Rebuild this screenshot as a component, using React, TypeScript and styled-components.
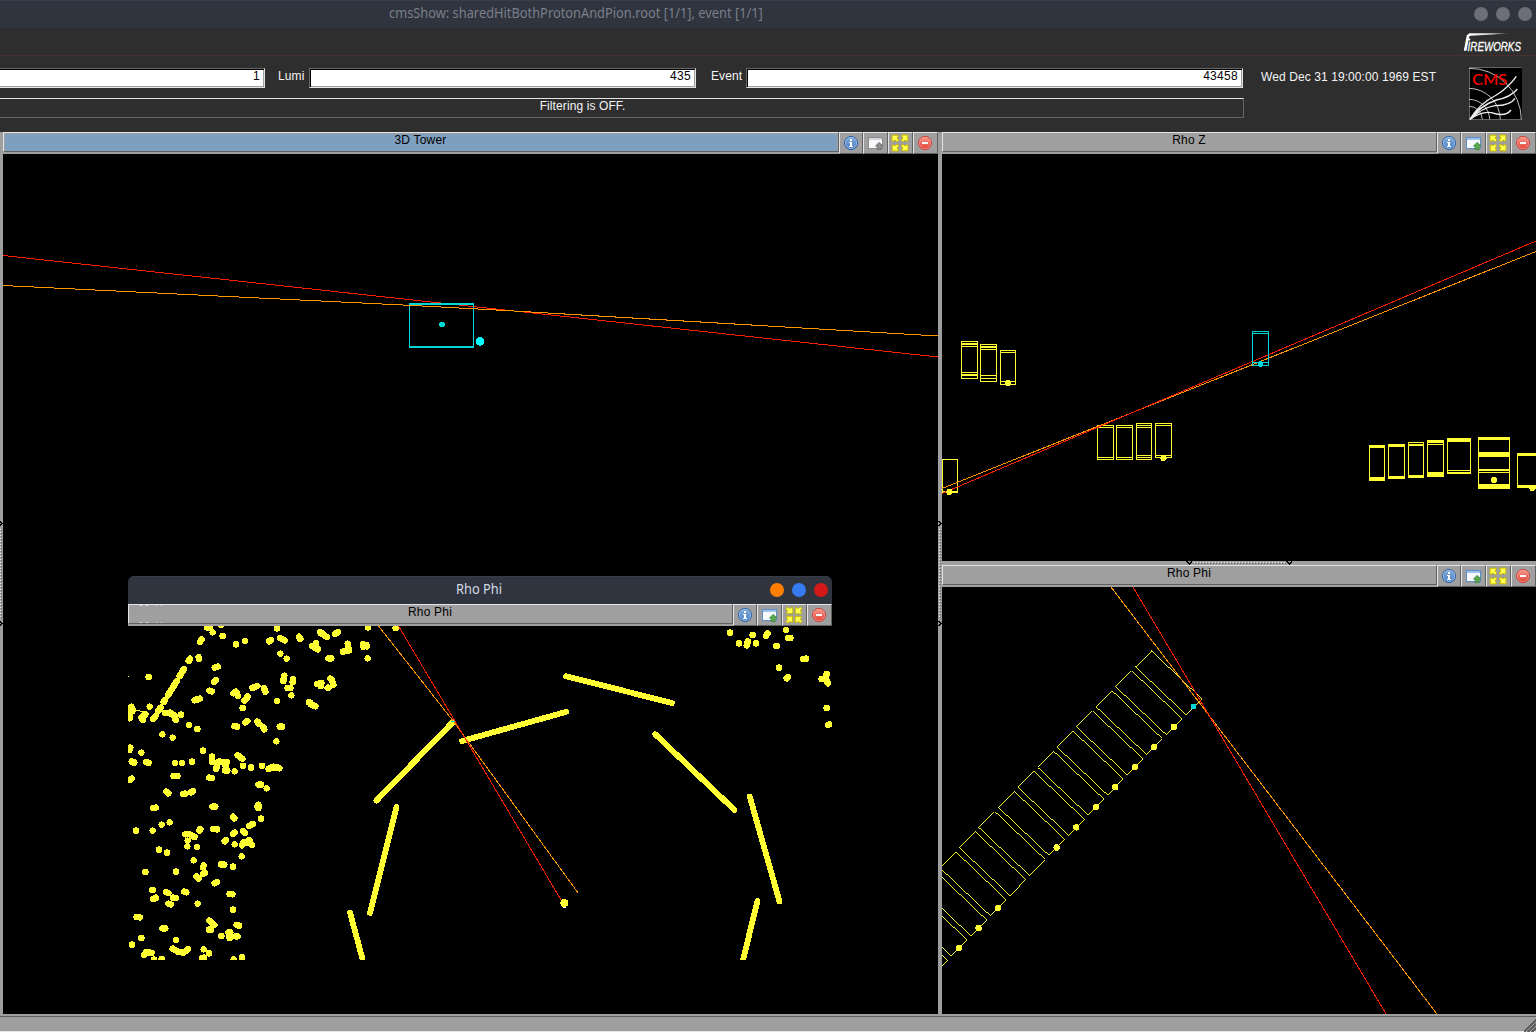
import React from 'react';
import styled, { createGlobalStyle, css } from 'styled-components';

const YELLOW = '#ffff33';
const CYAN = '#00d8d8';
const RED = '#ff1e00';
const ORANGE = '#ff9600';

const GlobalStyle = createGlobalStyle`
  * { box-sizing: border-box; }
  html, body { margin: 0; padding: 0; background: #2e2e2e; }
  body { font-family: "Liberation Sans", Arial, sans-serif; font-size: 12px; overflow: hidden; }
  svg { display: block; }
`;

const Screen = styled.div`
  position: relative;
  display: flex;
  flex-direction: column;
  width: 1536px;
  height: 1032px;
  overflow: hidden;
  background: #2e2e2e;
`;

const TitleBar = styled.header`
  display: flex;
  align-items: center;
  justify-content: flex-end;
  height: 28px;
  flex: none;
  padding-right: 4px;
  border-top: 1px solid #383c48;
  background: #2f343f;
`;

const WindowTitle = styled.h1<{ $muted?: boolean }>`
  flex: 1;
  margin: 0 0 3px;
  padding-left: ${p => (p.$muted ? 389 : 328)}px;
  font: 400 14px/18px "Noto Sans", sans-serif;
  white-space: nowrap;
  color: ${p => (p.$muted ? '#7b7f89' : '#d3dae3')};
`;

const Condensed = styled.span`
  display: inline-block;
  transform: scaleX(0.916);
  transform-origin: 0 50%;
`;

const WindowButtons = styled.div`
  display: flex;
  gap: 8px;
  margin-bottom: 1px;
`;

const WindowButton = styled.span<{ $color: string }>`
  width: 14px;
  height: 14px;
  border-radius: 50%;
  background: ${p => p.$color};
`;

const ControlArea = styled.section`
  display: flex;
  flex-direction: column;
  height: 104px;
  flex: none;
  color: #f4f4f4;
`;

const MenuStrip = styled.div`
  display: flex;
  justify-content: flex-end;
  height: 28px;
  padding: 4px 10px 0 0;
  border-bottom: 1px solid #4c3030;
`;

const ControlBody = styled.div`
  display: flex;
  height: 76px;
`;

const ControlLeft = styled.div`
  width: 1244px;
  padding-top: 12px;
`;

const EventRow = styled.div`
  display: flex;
  height: 20px;
`;

const FieldLabel = styled.label<{ $width: number }>`
  width: ${p => p.$width}px;
  padding: 0 4px 0 ${p => (p.$width > 44 ? 15 : 13)}px;
  line-height: 17px;
  letter-spacing: 0.1px;
  white-space: nowrap;
`;

const NumberField = styled.div<{ $width: number; $open?: boolean }>`
  width: ${p => p.$width}px;
  height: 20px;
  border: 1px solid;
  border-color: #666 #e4e4e4 #e4e4e4 #666;
  border-left-width: ${p => (p.$open ? 0 : 1)}px;
  box-shadow: inset ${p => (p.$open ? 0 : 1)}px 1px #000, inset -1px -1px #a0a0a0;
  padding-right: 4px;
  background: #fff;
  color: #000;
  line-height: 15px;
  letter-spacing: 0.3px;
  text-align: right;
`;

const FilterFrame = styled.div`
  display: flex;
  justify-content: center;
  height: 20px;
  margin-top: 10px;
  padding-right: 78px;
  border: 1px solid;
  border-width: 1px 1px 1px 0;
  border-color: #e4e4e4 #666 #666;
  line-height: 14px;
  letter-spacing: 0.1px;
`;

const DateText = styled.div`
  width: 225px;
  padding: 13px 0 0 17px;
  line-height: 17px;
  letter-spacing: 0.09px;
  white-space: nowrap;
`;

const LogoSlot = styled.div`
  padding-top: 11px;
`;

const Workspace = styled.main`
  display: flex;
  height: 882px;
  flex: none;
  background: #9f9f9f;
`;

const LeftColumn = styled.section`
  display: flex;
  flex-direction: column;
  width: 935px;
`;

const RightColumn = styled.section`
  display: flex;
  flex-direction: column;
  width: 594px;
`;

const HeaderRow = styled.div`
  display: flex;
  height: 22px;
  flex: none;
  background: #9f9f9f;
`;

const HeaderTitle = styled.div<{ $active?: boolean }>`
  position: relative;
  flex: 1;
  height: 20px;
  padding-right: 1px;
  border: 1px solid;
  border-color: #e4e4e4 #606060 #606060 #e4e4e4;
  ${p => p.$active && css`box-shadow: inset 1px 1px #9f9f9f, inset -1px 0 #9f9f9f;`}
  background: ${p => (p.$active ? '#7f9fbf' : '#9f9f9f')};
  color: #000;
  line-height: 15px;
  letter-spacing: 0.2px;
  text-align: center;
`;

const HeaderButtons = styled.div`
  display: grid;
  grid-template-columns: 24px 25px 25px 25px;
`;

const HeaderButton = styled.button<{ $shift?: boolean }>`
  display: flex;
  align-items: center;
  justify-content: center;
  height: 22px;
  margin: 0;
  padding: 0 ${p => (p.$shift ? 1 : 0)}px 0 0;
  border: 1px solid;
  border-color: #e4e4e4 #606060 #606060 #e4e4e4;
  background: #9f9f9f;
`;

const Viewport = styled.div<{ $height: number }>`
  height: ${p => p.$height}px;
  background: #000;
  overflow: hidden;
`;

const Splitter = styled.div<{ $size: number; $row?: boolean }>`
  flex: none;
  background: #9f9f9f;
  ${p => (p.$row ? css`height: ${p.$size}px;` : css`width: ${p.$size}px;`)}
`;

const StatusBar = styled.footer`
  display: flex;
  height: 18px;
  padding-top: 2px;
  flex: none;
  background: #9f9f9f;
  box-shadow: inset 0 -1px #e4e4e4;
`;

const StatusInner = styled.div`
  display: flex;
  justify-content: flex-end;
  flex: 1;
  border-top: 1px solid #606060;
`;

const FloatingWindow = styled.section`
  position: absolute;
  left: 128px;
  top: 576px;
  width: 704px;
  height: 384px;
  border-radius: 6px 6px 0 0;
  overflow: hidden;
  background: #000;
`;

const SpeckOverlay = styled.svg`
  position: absolute;
  left: 11px;
  top: 0;
`;

const InfoIcon = () => (
  <svg width="16" height="16" viewBox="0 0 16 16">
    <defs>
      <linearGradient id="info" x2="0" y2="1">
        <stop stopColor="#82abdc" /><stop offset="1" stopColor="#4c80bf" />
      </linearGradient>
    </defs>
    <circle cx="8" cy="8" r="6.6" fill="url(#info)" stroke="#3165a8" />
    <circle cx="8" cy="8" r="5.6" fill="none" stroke="#a5c6e8" strokeWidth=".7" />
    <path d="M7 4h2v2H7zM6 7h3v4h1v1H6v-1h1V8H6z" fill="#fff" />
  </svg>
);

const UndockIcon = ({ muted }: { muted?: boolean }) => (
  <svg width="17" height="16" viewBox="0 0 17 16">
    <rect x="1.5" y="2.5" width="14" height="11" fill="#f7f9fc" stroke={muted ? '#8c8c8c' : '#5c8dcb'} />
    <path d="M2 3h13v2H2z" fill={muted ? '#d5d5d5' : '#9fc2ec'} />
    <path d="M12.2 7.4 15.9 11H14.2v3.4h-4V11H8.5z" fill={muted ? '#8c8c8c' : '#5caa50'} stroke={muted ? '#666' : '#347f35'} strokeWidth=".8" />
  </svg>
);

const ExpandIcon = ({ inward }: { inward?: boolean }) => (
  <svg width="18" height="18" viewBox="0 0 18 18">
    {[0, 90, 180, 270].map(a => (
      <g key={a} transform={`rotate(${a} 9 9)`}>
        <path
          transform={inward ? 'rotate(180 4.4 4.4)' : undefined}
          d="M1 1.2H7V3L6 4 7.9 6 6.2 7.8 4 6 3 7.1H1z"
          fill="#ffff50" stroke="#c8ba00" strokeWidth="1"
        />
      </g>
    ))}
  </svg>
);

const CloseIcon = () => (
  <svg width="16" height="16" viewBox="0 0 16 16">
    <defs>
      <linearGradient id="stop" x2="0" y2="1">
        <stop stopColor="#f79a8c" /><stop offset="1" stopColor="#e24235" />
      </linearGradient>
    </defs>
    <circle cx="8" cy="8" r="6.5" fill="url(#stop)" stroke="#d13c31" />
    <circle cx="8" cy="8" r="5.6" fill="none" stroke="#f7aaa0" strokeWidth=".6" />
    <path d="M5 7h6v2H5z" fill="#fff" />
  </svg>
);

const FireworksLogo = () => (
  <svg width="64" height="23" viewBox="0 0 64 23">
    <defs>
      <linearGradient id="trail" x2="1">
        <stop stopColor="#fff" /><stop offset=".55" stopColor="#ddd" /><stop offset="1" stopColor="#111" />
      </linearGradient>
    </defs>
    <path d="M4 4 8 1.2 51 1.3 9 3.8z" fill="url(#trail)" />
    <path d="M1.8 18.8 4.2 6Q5 1.4 9 1.2L8.6 3.6Q7 4 6.7 6.6H8.4L8 8.4H6.4L4.5 18.8z" fill="#fff" />
    <text transform="translate(5.6 18.7) scale(.785 1)" fontFamily="Liberation Sans, Arial, sans-serif" fontSize="12.5" fontStyle="italic" fill="#fff" stroke="#fff" strokeWidth=".3">IREWORKS</text>
  </svg>
);

const CmsLogo = () => (
  <svg width="53" height="53" viewBox="0 0 159 159">
    <path fill="#000" d="M0 0h159v159H0z" />
    <path fill="none" stroke="#777" strokeWidth="3" d="M158 1H1v157h158" />
    <g fill="none" stroke="#bdbdbd" strokeWidth="3">
      <path d="M0 4A155 155 0 0 1 157 157M0 64A95 95 0 0 1 94 157M0 97A62 62 0 0 1 62 157M0 118A40 40 0 0 1 40 157" />
    </g>
    <g fill="none" stroke="#eee" strokeWidth="4">
      <path d="M3 157Q28 112 82 84Q118 62 142 28" />
      <path d="M3 157Q34 116 82 99Q125 91 145 66" />
      <path d="M3 157Q39 122 78 116Q124 116 138 94" />
      <path d="M3 157Q38 132 67 137Q110 151 126 129" />
    </g>
    <path d="M2 158 20 132 37 119 21 145z" fill="#eee" />
    <text x="10" y="53" textLength="104" lengthAdjust="spacingAndGlyphs" fontFamily="Lato, Liberation Sans, sans-serif" fontSize="48" fill="#f00" stroke="#f00" strokeWidth=".4">CMS</text>
  </svg>
);

const VerticalGrip = ({ width, center }: { width: number; center: number }) => (
  <svg width={width} height="882" shapeRendering="crispEdges">
    <path d={`M${center} 397v88`} stroke="#e8e8e8" strokeWidth="1" strokeDasharray="1 2" />
    <path d={`M${center + 1} 398v88`} stroke="#666" strokeWidth="1" strokeDasharray="1 2" />
    {[391.5, 491.5].map(y => (
      <path key={y} d={`M${center - 1} ${y - 2.5}l2.5 2.5-2.5 2.5`} fill="none" stroke="#000" strokeWidth="1.6" />
    ))}
  </svg>
);

const HorizontalGrip = () => (
  <svg width="594" height="4" shapeRendering="crispEdges">
    <path d="M252 1.5h92" stroke="#e8e8e8" strokeDasharray="1 2" />
    <path d="M253 2.5h92" stroke="#666" strokeDasharray="1 2" />
    {[247.5, 347.5].map(x => (
      <path key={x} d={`M${x - 3} .5l3 2.5 3-2.5`} fill="none" stroke="#000" strokeWidth="1.4" />
    ))}
  </svg>
);

const ResizeGrip = () => (
  <svg width="14" height="15" shapeRendering="crispEdges">
    <path d="M1 15 14 2M5 15 14 6M9 15 14 10" stroke="#eee" />
    <path d="M2 15 14 3M6 15 14 7M10 15 14 11" stroke="#606060" strokeWidth="1.5" />
  </svg>
);

interface HeaderProps { title: string; active?: boolean; floating?: boolean }

const PanelHeader = ({ title, active, floating }: HeaderProps) => (
  <HeaderRow>
    <HeaderTitle $active={active}>
      {title}
      {floating && (
        <SpeckOverlay width="24" height="18" shapeRendering="crispEdges">
          <path d="M0 .5h2M6 .5h2M16 .5h1M21 .5h1M0 17.5h2M6 17.5h2M16 17.5h1M21 17.5h1" stroke="#e4e4e4" />
        </SpeckOverlay>
      )}
    </HeaderTitle>
    <HeaderButtons>
      <HeaderButton><InfoIcon /></HeaderButton>
      <HeaderButton><UndockIcon muted={active} /></HeaderButton>
      <HeaderButton $shift><ExpandIcon inward={floating} /></HeaderButton>
      <HeaderButton $shift><CloseIcon /></HeaderButton>
    </HeaderButtons>
  </HeaderRow>
);

const TowerView = () => (
  <svg width="935" height="860" viewBox="3 154 935 860" shapeRendering="crispEdges" fill="none">
    <path d="M3 255.5 938 357" stroke={RED} />
    <path d="M409 303h65v2h-65zM409 346h65v2h-65zM409 303h1v45h-1zM473 303h1v45h-1z" fill={CYAN} />
    <path d="M3 285.5 409 305.3 500 310.2 938 336" stroke={ORANGE} />
    <circle cx="442" cy="324.5" r="3" fill={CYAN} />
    <circle cx="480" cy="341.5" r="4.3" fill="#00ffff" />
  </svg>
);

/* x, y, width, height, then [top, thickness] of each horizontal bar */
type Chamber = [number, number, number, number, [number, number][]];

const chambers: Chamber[] = [
  [961, 341, 17, 37, [[341, 1], [343, 2], [346, 1], [372, 1], [374, 2], [378, 1]]],
  [980, 344, 17, 37, [[344, 1], [346, 2], [349, 1], [375, 1], [378, 1], [381, 1]]],
  [1000, 350, 16, 35, [[350, 1], [352, 1], [381, 1], [384, 1]]],
  [1097, 425, 17, 35, [[425, 1], [427, 1], [457, 1], [459, 1]]],
  [1116, 425, 17, 35, [[425, 1], [427, 1], [457, 1], [459, 1]]],
  [1136, 423, 16, 37, [[423, 1], [425, 1], [427, 1], [455, 1], [457, 1], [459, 1]]],
  [1155, 423, 17, 35, [[423, 1], [425, 1], [455, 1], [457, 1]]],
  [942, 459, 16, 34, [[459, 1], [491, 2]]],
  [1369, 445, 16, 36, [[445, 3], [477, 4]]],
  [1388, 444, 17, 35, [[444, 3], [476, 3]]],
  [1408, 442, 16, 36, [[442, 1], [444, 2], [475, 3]]],
  [1427, 440, 17, 37, [[440, 3], [444, 1], [472, 5]]],
  [1447, 438, 24, 36, [[438, 4], [470, 1], [472, 2]]],
  [1478, 437, 32, 52, [[437, 3], [452, 5], [469, 2], [472, 1], [484, 5]]],
  [1517, 453, 32, 35, [[453, 3], [485, 3]]],
];

const ChamberShape = ({ c, color }: { c: Chamber; color: string }) => {
  const [x, y, w, h, bars] = c;
  return (
    <g fill={color}>
      <rect x={x} y={y} width="1" height={h} />
      <rect x={x + w - 1} y={y} width="1" height={h} />
      {bars.map(([top, t]) => <rect key={top} x={x} y={top} width={w} height={t} />)}
    </g>
  );
};

const RhoZView = () => (
  <svg width="594" height="407" viewBox="942 154 594 407" shapeRendering="crispEdges">
    {chambers.map(c => <ChamberShape key={c[0]} c={c} color={YELLOW} />)}
    <path d="M942 488.5 1536 251.5" stroke={ORANGE} fill="none" />
    <path d="M942 493.5 1536 241" stroke={RED} fill="none" />
    <ChamberShape c={[1252, 331, 17, 35, [[331, 1], [333, 1], [362, 1], [365, 1]]]} color={CYAN} />
    {[[1008, 383], [1163.5, 458], [949.5, 492], [1494, 479.7], [1532.5, 488]].map(([x, y]) => (
      <circle key={x} cx={x} cy={y} r="3.1" fill={YELLOW} />
    ))}
    <circle cx="1260.5" cy="364" r="3" fill={CYAN} />
  </svg>
);

const RhoPhiView = () => (
  <svg width="594" height="427" viewBox="942 587 594 427" shapeRendering="crispEdges" fill="none">
    {Array.from({ length: 14 }, (_, i) => (
      <path
        key={i}
        transform={`translate(${-19.53 * i} ${20.13 * i})`}
        d="M1151.2 650.5 1135.2 666.5 1185.8 714.5 1201.5 698.5Z"
        stroke={YELLOW}
        strokeWidth=".95"
      />
    ))}
    {[1, 2, 3, 4, 5, 6, 7, 10, 11, 12].map(i => (
      <circle key={i} cx={1193.4 - 19.53 * i} cy={706.6 + 20.13 * i} r="3.2" fill={YELLOW} />
    ))}
    <path d="M1190.5 704h5v5h-5z" fill={CYAN} />
    <path d="M1111 587 1437 1014" stroke={ORANGE} />
    <path d="M1133 587 1386 1014" stroke={RED} />
  </svg>
);

/* Each hit is a short stroke x1,y1,x2,y2; plotted at a third of its size. */
const upperHits = `262,173,269,174 278,187,278,187 303,165,303,165 240,215,245,208 308,198,308,198 348,223,348,223 375,213,375,213
447,214,453,211 471,175,471,175 480,204,494,211 537,200,541,207 600,187,620,201 602,190,606,190 645,191,654,187 744,172,744,172
827,174,827,174 576,228,594,238 588,219,588,228 683,221,687,242 669,245,684,241 729,223,740,229 730,230,740,226 743,265,743,265
625,265,634,265 481,251,481,251 500,266,500,266 206,273,210,266 236,261,237,267 179,318,192,297 144,376,170,333 131,396,134,391
114,424,122,413 100,447,106,439 284,293,294,290 86,321,86,321 282,335,287,330 268,362,276,364 232,389,240,386 224,391,232,387
89,410,89,410 33,410,33,416 29,431,29,445 37,415,37,423 67,440,76,433 64,443,69,450 136,429,152,428 151,431,163,436
162,438,167,450 183,434,183,434 207,465,207,465 232,477,232,477 127,493,127,493 158,503,158,503 31,533,29,540 64,548,64,548
35,574,42,577 79,576,86,579 165,579,165,579 186,579,186,579 216,575,216,575 249,542,249,542 276,560,276,576 296,575,316,576
292,584,288,595 317,576,318,590 353,556,367,566 369,587,369,587 393,592,393,592 426,587,426,587 446,597,460,592 460,592,478,595
340,370,350,367 347,365,354,377 397,354,412,348 432,354,436,366 383,380,373,392 368,414,368,414 471,393,471,393 343,468,351,470
376,457,382,453 412,455,418,462 430,472,433,478 479,470,486,470 469,514,469,514 493,317,490,333 519,327,518,336 503,354,511,354
514,376,514,376 567,397,571,398 572,403,586,409 591,342,604,339 601,343,602,348 631,326,635,330 637,334,640,345 623,354,625,353`;

const lowerHits = `36,6,43,8 79,7,86,9 276,5,276,5 294,7,288,27 296,6,320,6 318,10,317,17 315,31,322,32 344,34,344,34 369,17,369,17
393,23,393,23 426,17,426,17 446,26,460,20 460,20,478,24 161,48,172,48 268,53,276,54 30,60,35,56 139,95,145,100 189,102,196,101
213,97,219,93 415,74,423,74 440,85,440,85 99,144,107,143 277,140,286,140 412,139,417,139 415,134,415,144 423,176,423,176
339,170,343,175 388,198,398,192 48,212,48,212 98,212,98,212 125,194,125,194 149,187,149,187 238,212,241,207 280,207,291,208
196,223,207,222 213,226,224,231 203,242,203,242 202,259,202,259 231,261,231,261 314,244,318,241 339,222,344,218 369,214,375,219
344,253,344,253 366,256,370,248 375,249,388,240 382,246,396,254 117,269,117,269 141,278,141,278 365,289,365,289 221,301,221,301
251,316,249,322 249,342,255,338 230,350,236,356 303,313,313,314 339,320,339,320 76,336,76,336 168,335,168,335 284,370,291,366
96,390,99,390 138,396,145,399 100,417,108,413 192,395,199,397 159,413,168,414 145,431,153,433 233,431,233,431 329,402,337,403
339,449,339,449 50,471,59,472 127,505,136,505 268,482,283,495 267,509,273,509 350,495,357,497 304,528,304,528 325,517,331,517
329,517,329,534 346,529,353,529 64,534,64,534 36,554,36,554 168,540,168,540 72,585,79,576 79,576,95,579 158,566,174,575
174,575,191,578 191,578,204,567 251,568,251,568 267,580,267,580 102,599,102,599 125,597,125,597 246,594,252,593 341,598,341,598 366,592,366,592`;

const rightHits = `90,188,90,188 117,220,117,220 158,195,158,195 168,220,168,220 144,214,140,226 203,190,198,197 228,228,231,228 258,180,258,180
264,204,271,204 309,267,318,266 237,293,237,293 260,325,264,321 380,312,380,312 365,327,373,326 377,326,384,340 380,414,380,414 384,465,389,463`;

const hitPath = (hits: string) =>
  hits.trim().split(/\s+/).map(h => {
    const [x1, y1, x2, y2] = h.split(',').map(Number);
    return `M${x1} ${y1}L${x2 + 0.01} ${y2}`;
  }).join('');

const FloatingView = () => (
  <svg width="704" height="334" viewBox="128 626 704 334" shapeRendering="crispEdges" fill="none">
    <g stroke={YELLOW} strokeWidth="19.5" strokeLinecap="round">
      <path transform="translate(120 570) scale(.33333)" d={hitPath(upperHits)} />
      <path transform="translate(120 760) scale(.33333)" d={hitPath(lowerHits)} />
      <path transform="translate(700 570) scale(.33333)" d={hitPath(rightHits)} />
    </g>
    <path
      stroke={YELLOW} strokeWidth="5.8" strokeLinecap="round"
      d="M566 676.2 672 703M462 741 566.5 711.8M453 722 376.5 800.5M396.5 807 370 913M350 912.5 362.5 959M655 734 734.5 810M749.7 796.5 779.5 901.5M757.5 901 743 960"
    />
    <path d="M136 710 144 712M128 676h1" stroke={YELLOW} />
    <path d="M378.5 626 453.5 721.5 578.5 893.5" stroke={ORANGE} />
    <path d="M398.5 626 564 905" stroke={RED} />
    <circle cx="564.3" cy="903" r="4" fill={YELLOW} />
    <path d="M563 907h3" stroke="#fff" />
    <path d="M451 721h4" stroke={CYAN} />
  </svg>
);

export default function App() {
  return (
    <Screen>
      <GlobalStyle />
      <TitleBar>
        <WindowTitle $muted>
          <Condensed>cmsShow: sharedHitBothProtonAndPion.root [1/1], event [1/1]</Condensed>
        </WindowTitle>
        <WindowButtons>
          {[0, 1, 2].map(i => <WindowButton key={i} $color="#6c6f78" />)}
        </WindowButtons>
      </TitleBar>

      <ControlArea>
        <MenuStrip><FireworksLogo /></MenuStrip>
        <ControlBody>
          <ControlLeft>
            <EventRow>
              <NumberField $width={265} $open>1</NumberField>
              <FieldLabel $width={44}>Lumi</FieldLabel>
              <NumberField $width={387}>435</NumberField>
              <FieldLabel $width={50}>Event</FieldLabel>
              <NumberField $width={497}>43458</NumberField>
            </EventRow>
            <FilterFrame>Filtering is OFF.</FilterFrame>
          </ControlLeft>
          <DateText>Wed Dec 31 19:00:00 1969 EST</DateText>
          <LogoSlot><CmsLogo /></LogoSlot>
        </ControlBody>
      </ControlArea>

      <Workspace>
        <Splitter $size={3}><VerticalGrip width={3} center={0.5} /></Splitter>
        <LeftColumn>
          <PanelHeader title="3D Tower" active />
          <Viewport $height={860}><TowerView /></Viewport>
        </LeftColumn>
        <Splitter $size={4}><VerticalGrip width={4} center={1.5} /></Splitter>
        <RightColumn>
          <PanelHeader title="Rho Z" />
          <Viewport $height={407}><RhoZView /></Viewport>
          <Splitter $size={4} $row><HorizontalGrip /></Splitter>
          <PanelHeader title="Rho Phi" />
          <Viewport $height={427}><RhoPhiView /></Viewport>
        </RightColumn>
      </Workspace>

      <StatusBar><StatusInner><ResizeGrip /></StatusInner></StatusBar>

      <FloatingWindow>
        <TitleBar>
          <WindowTitle><Condensed>Rho Phi</Condensed></WindowTitle>
          <WindowButtons>
            <WindowButton $color="#ff7f00" />
            <WindowButton $color="#367bf0" />
            <WindowButton $color="#d41919" />
          </WindowButtons>
        </TitleBar>
        <PanelHeader title="Rho Phi" floating />
        <Viewport $height={334}><FloatingView /></Viewport>
      </FloatingWindow>
    </Screen>
  );
}
